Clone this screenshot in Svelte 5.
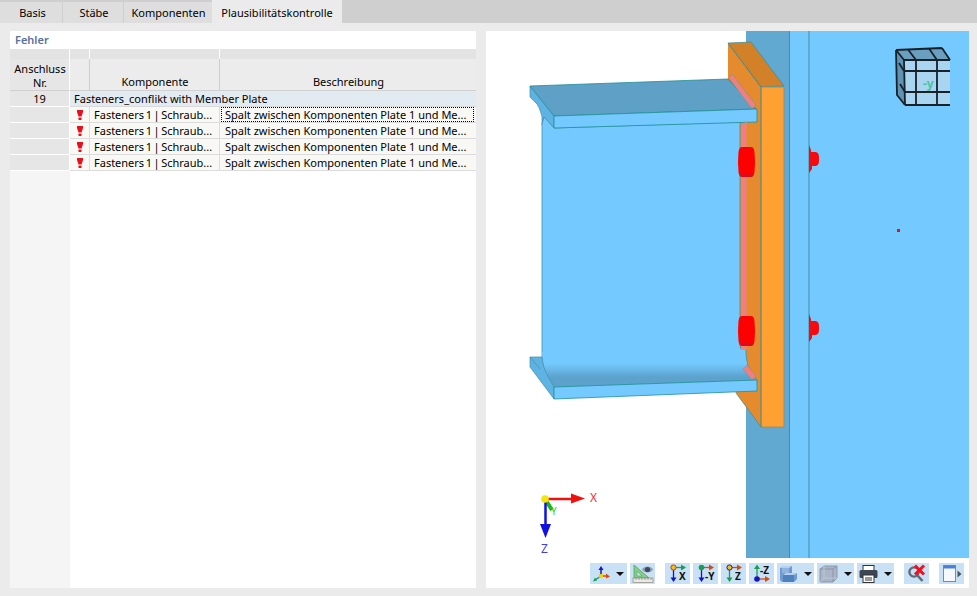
<script lang="ts">
  const tabs = ['Basis', 'Stäbe', 'Komponenten', 'Plausibilitätskontrolle'];
  const rows = [1, 2, 3, 4];
</script>

<div class="window">
  <div class="tabbar">
    {#each tabs as tab, i}
      <div class="tab tab-{i}" class:active={i === 3}>{tab}</div>
    {/each}
  </div>

  <div class="content">
    <section class="panel left">
      <div class="title">Fehler</div>
      <div class="grid">
        <div class="band"></div><div class="band"></div><div class="band"></div><div class="band last"></div>
        <div class="head rowhead">Anschluss<br />Nr.</div>
        <div class="head"></div>
        <div class="head">Komponente</div>
        <div class="head last">Beschreibung</div>

        <div class="rownum">19</div>
        <div class="group">Fasteners_conflikt with Member Plate</div>

        {#each rows as r}
          <div class="rownum"></div>
          <div class="cell icon">
            <svg width="6" height="10" viewBox="0 0 6 10">
              <path d="M0 0h6v2l-1.5 4.5h-3l-1.5-4.5z" fill="#e8101c" />
              <rect x="1.5" y="7.5" width="3" height="2.5" fill="#e8101c" />
            </svg>
          </div>
          <div class="cell comp">Fasteners 1 | Schraub...</div>
          <div class="cell last desc"><span class:focus={r === 1}>Spalt zwischen Komponenten Plate 1 und Me...</span></div>
        {/each}
      </div>
      <div class="stub"></div>
    </section>

    <section class="panel right">
      <div class="scene">
        <svg width="483" height="527" viewBox="486 31 483 527">
          <defs>
            <linearGradient id="fillet" x1="0" y1="0" x2="0" y2="1">
              <stop offset="0" stop-color="#74caff" />
              <stop offset="0.32" stop-color="#74caff" />
              <stop offset="0.72" stop-color="#5ca2cc" />
              <stop offset="1" stop-color="#5ca2cc" />
            </linearGradient>
            <linearGradient id="bolt" x1="0" y1="0" x2="0" y2="1">
              <stop offset="0" stop-color="#f40008" />
              <stop offset="0.1" stop-color="#ff0000" />
              <stop offset="0.82" stop-color="#ff0000" />
              <stop offset="1" stop-color="#cf1020" />
            </linearGradient>
          </defs>

          <!-- column -->
          <rect x="746" y="31" width="223" height="527" fill="#74caff" />
          <rect x="746" y="31" width="44" height="527" fill="#62a9d2" />
          <path d="M789.5 31V558M809 31V558" stroke="#3f8fa5" stroke-width="1" />

          <!-- end plate -->
          <path d="M728 43L761 87V427L736 393L728 380Z" fill="#e58a2d" />
          <path d="M728 43L751 42L784 86L761 87Z" fill="#d38128" stroke="#2f8f9a" stroke-width="0.7" />
          <path d="M761 87H784V427H761Z" fill="#ffa033" stroke="#8d8d70" stroke-width="0.8" />
          <path d="M728 43L761 87V427L736 393" fill="none" stroke="#2f8f9a" stroke-width="0.7" />

          <!-- top flange -->
          <path d="M530 86V97L537 104C540 109 541 113 542 117V125L544 117L554 128V115Z" fill="#5fb3e3" stroke="#3f8fa5" stroke-width="0.7" />
          <path d="M530 86L728 79L756 109L554 116Z" fill="#5ea0c6" stroke="#1f8f96" stroke-width="0.8" />
          <path d="M729 78L732 74L756 105L752 109Z" fill="#f08080" stroke="#5d9aa0" stroke-width="0.5" />

          <!-- web -->
          <path d="M542 357V124L544 117L554 128L740 122V346L741 349H746C746 360 747 370 757 380L554 387C548 376 542 370 542 357Z" fill="#74caff" stroke="#3f8fa5" stroke-width="0.8" />
          <path d="M554 128L757 122V109L554 116Z" fill="#74caff" stroke="#1f8f96" stroke-width="0.8" />
          <path d="M741 124H745V121H746.5V350H741Z" fill="#f08080" />
          <path d="M542 352C543 370 549 378 554 387L757 380C751 376 748 370 746 360L740 352Z" fill="url(#fillet)" />

          <!-- bottom flange -->
          <path d="M530 357H542C543 370 549 378 554 387V399L530 367Z" fill="#5fb3e3" stroke="#3f8fa5" stroke-width="0.7" />
          <path d="M530 357L540 369" stroke="#3f8fa5" stroke-width="0.7" />
          <path d="M743 369L747 365L756 376L752 380Z" fill="#f08080" stroke="#5d9aa0" stroke-width="0.5" />
          <path d="M554 387L757 380V391L554 399Z" fill="#74caff" stroke="#1f8f96" stroke-width="0.8" />

          <!-- bolts -->
          <path d="M742 147H751Q754 147 754.500 152Q755.500 162 754.500 172Q754 177 751 177H742Q739 177 738.500 172Q737.500 162 738.500 152Q739 147 742 147Z" fill="url(#bolt)" />
          <path d="M742 316H751Q754 316 754.500 321Q755.500 331 754.500 341Q754 346 751 346H742Q739 346 738.500 341Q737.500 331 738.500 321Q739 316 742 316Z" fill="url(#bolt)" />
          <path d="M809 145L811 150V152H816Q819 153 819 157V161Q819 165 816 166H812V169L809 173Z" fill="#f50a10" />
          <path d="M809 314L811 319V321H816Q819 322 819 326V330Q819 334 816 335H812V338L809 342Z" fill="#f50a10" />
          <rect x="897" y="229" width="3" height="3" fill="#e81010" />

          <!-- view cube -->
          <path d="M896 50L942 48L950 60H904Z" fill="#6a9fbf" />
          <path d="M896 50L904 60L905 105L897 95Z" fill="#5f93b4" />
          <path d="M904 60H950V105H905Z" fill="#a9d5f0" />
          <g stroke="#17212a" stroke-width="1.8" fill="none">
            <path d="M904 60H950M904.5 71H950M905 92H950M905 105H950" />
            <path d="M904 60L905 105M916 60V105M937 60V105" />
            <path d="M896 50L904 60M908 49.5L916 60M929 48.5L937 60M942 48L950 60M896 50L942 48" />
            <path d="M896 50L897 95L905 105M899 63L904 71M900 84L905 92" />
          </g>
          <text x="923" y="88" class="cube-label">-y</text>

          <!-- axes -->
          <path d="M545 499L552 510" stroke="#14b814" stroke-width="4" />
          <path d="M545 499H572" stroke="#f01010" stroke-width="2.5" />
          <path d="M571 493.5L585 498.5L571 503.5Z" fill="#f01010" />
          <path d="M545.5 499V526" stroke="#1010e0" stroke-width="2.5" />
          <path d="M540 524L545.5 538L551 524Z" fill="#1010e0" />
          <circle cx="545" cy="499" r="3.8" fill="#f2e60c" />
          <text x="590" y="502" class="axis" fill="#f03030">X</text>
          <text x="551" y="515" class="axis small" fill="#30d030">Y</text>
          <text x="541" y="553" class="axis" fill="#4040e0">Z</text>
        </svg>
      </div>

      <div class="toolbar">
        <div class="btn wide">
          <svg width="18" height="18" viewBox="0 0 18 18">
            <path d="M9 10V3" stroke="#1414d0" stroke-width="1.5" /><path d="M6.5 5L9 1L11.5 5Z" fill="#1414d0" />
            <path d="M9 11H15" stroke="#d84a10" stroke-width="1.5" /><path d="M14 8.5L18 11.5L14 13.5Z" fill="#d84a10" />
            <path d="M9 11L3 15" stroke="#12a060" stroke-width="1.5" /><path d="M1 16.5L3 12.5L5 15.5Z" fill="#12a060" />
            <rect x="7" y="9" width="4" height="3.5" fill="#f0d010" />
          </svg>
          <span class="caret"></span>
        </div>
        <div class="btn">
          <svg width="22" height="20" viewBox="0 0 22 20">
            <path d="M2 1L17 14H2Z" fill="#7fd088" stroke="#5a9a68" stroke-width="0.8" />
            <path d="M5 7L10 12H5Z" fill="#c9e1f5" stroke="#5a9a68" stroke-width="0.6" />
            <rect x="1" y="14" width="20" height="4.5" fill="#e9e9e4" stroke="#8a8a80" stroke-width="0.7" />
            <path d="M4 14v2M7 14v2M10 14v2M13 14v2M16 14v2M19 14v2" stroke="#777" stroke-width="0.6" />
            <path d="M10 5.5C12 1.5 19 1.5 21 5.5C19 9.5 12 9.5 10 5.5Z" fill="#8e9bb0" />
            <circle cx="15.5" cy="5.5" r="2.6" fill="#3b4a66" />
          </svg>
        </div>
        <div class="btn gap">
          <svg width="22" height="19" viewBox="0 0 22 19">
            <path d="M6.5 3V15" stroke="#1414c0" stroke-width="1.3" /><path d="M3.5 13.5L6.5 18L9.5 13.5Z" fill="#1414c0" />
            <path d="M7 3.5H15" stroke="#14a050" stroke-width="1.3" /><path d="M14 0.5L19 3.5L14 6.5Z" fill="#14a050" />
            <circle cx="6.5" cy="3.5" r="2.6" fill="#f0c020" stroke="#d03020" stroke-width="1" />
            <text x="12" y="16" class="ax">X</text>
          </svg>
        </div>
        <div class="btn">
          <svg width="22" height="19" viewBox="0 0 22 19">
            <path d="M6.5 3V15" stroke="#1414c0" stroke-width="1.3" /><path d="M3.5 13.5L6.5 18L9.5 13.5Z" fill="#1414c0" />
            <path d="M7 3.5H15" stroke="#d84a10" stroke-width="1.3" /><path d="M14 0.5L19 3.5L14 6.5Z" fill="#d84a10" />
            <circle cx="6.5" cy="3.5" r="2.8" fill="#14a050" />
            <text x="10" y="16" class="ax">-Y</text>
          </svg>
        </div>
        <div class="btn">
          <svg width="22" height="19" viewBox="0 0 22 19">
            <path d="M6.5 3V15" stroke="#14a050" stroke-width="1.3" /><path d="M3.5 13.5L6.5 18L9.5 13.5Z" fill="#14a050" />
            <path d="M7 3.5H15" stroke="#d84a10" stroke-width="1.3" /><path d="M14 0.5L19 3.5L14 6.5Z" fill="#d84a10" />
            <circle cx="6.5" cy="3.5" r="2.6" fill="#f0c020" stroke="#1414c0" stroke-width="1" />
            <text x="12" y="16" class="ax">Z</text>
          </svg>
        </div>
        <div class="btn">
          <svg width="22" height="19" viewBox="0 0 22 19">
            <path d="M6 14V4" stroke="#14a050" stroke-width="1.3" /><path d="M3 5L6 0.5L9 5Z" fill="#14a050" />
            <path d="M7 15H15" stroke="#d84a10" stroke-width="1.3" /><path d="M14 12L19 15L14 18Z" fill="#d84a10" />
            <circle cx="6" cy="15" r="2.8" fill="#1414c0" />
            <text x="9" y="10" class="ax">-Z</text>
          </svg>
        </div>
        <div class="btn wide">
          <svg width="19" height="18" viewBox="0 0 19 18">
            <path d="M1 3L4 1H13L13 8H18V14L15 17H3L1 15Z" fill="#6d9bd2" />
            <path d="M1 3L4 1H13L10 3Z" fill="#b4d0ee" />
            <path d="M3 3H10V8H3Z" fill="#8fb4df" />
            <path d="M4 10L7 8H18L15 10Z" fill="#b4d0ee" />
            <path d="M4 10H15V17H4Z" fill="#4f82bd" />
          </svg>
          <span class="caret"></span>
        </div>
        <div class="btn wide">
          <svg width="19" height="18" viewBox="0 0 19 18" fill="#aab6c6" stroke="#8592a6" stroke-width="0.9">
            <path d="M1 4L5 1H18V13L14 17H1Z" />
            <path d="M1 4H14V17M14 4L18 1" fill="none" />
            <path d="M5 1V13H18M5 13L1 17" fill="none" stroke="#c2cad6" />
          </svg>
          <span class="caret"></span>
        </div>
        <div class="btn wide">
          <svg width="19" height="18" viewBox="0 0 19 18">
            <rect x="4" y="0.5" width="11" height="5" fill="#fff" stroke="#333" />
            <rect x="0.5" y="5" width="18" height="8" rx="1.5" fill="#3e4654" />
            <rect x="4" y="10" width="11" height="7.5" fill="#fff" stroke="#333" />
            <path d="M6 13h7M6 15h7" stroke="#333" />
          </svg>
          <span class="caret"></span>
        </div>
        <div class="btn gap2">
          <svg width="20" height="19" viewBox="0 0 20 19">
            <circle cx="7" cy="8" r="4.6" fill="none" stroke="#5f6a76" stroke-width="2.4" />
            <path d="M10.5 11.5L15.5 17" stroke="#5f6a76" stroke-width="2.6" />
            <path d="M8 1.5L17 10.5M17 1.5L8 10.5" stroke="#f01020" stroke-width="3" />
          </svg>
        </div>
        <div class="btn gap3">
          <svg width="20" height="19" viewBox="0 0 20 19">
            <rect x="1.5" y="1.5" width="12" height="16" fill="#f5f8fc" stroke="#7a8aa0" />
            <rect x="1.5" y="1.5" width="12" height="3" fill="#4a80d8" />
            <path d="M15.5 6.5L19.5 10L15.5 13.5Z" fill="#4a5560" />
          </svg>
        </div>
      </div>
    </section>
  </div>
</div>

<style>
  :global(body) {
    margin: 0;
  }

  .window {
    width: 977px;
    height: 596px;
    background: #ebebeb;
    font-family: 'Noto Sans', sans-serif;
    font-size: 11px;
    color: #000;
    overflow: hidden;
  }

  .tabbar {
    display: flex;
    height: 23px;
    background: #cfcfcf;
  }

  .tab {
    margin-top: 2px;
    margin-right: 1px;
    background: #dedede;
    text-align: center;
    line-height: 21px;
    box-sizing: border-box;
  }

  .tab-0 { width: 62px; padding-left: 3px; }
  .tab-1 { width: 60px; padding-left: 2px; }
  .tab-2 { width: 88px; margin-right: 0; padding-left: 1px; }
  .tab-3 { width: 130px; }

  .tab.active {
    margin-top: 0;
    background: #ebebeb;
    line-height: 25px;
  }

  .content {
    display: flex;
    gap: 10px;
    padding: 8px 8px 8px 10px;
    height: 573px;
    box-sizing: border-box;
  }

  .panel {
    background: #fff;
    position: relative;
  }

  .left {
    width: 466px;
    display: flex;
    flex-direction: column;
  }

  .right {
    width: 483px;
    display: flex;
    flex-direction: column;
  }

  .title {
    height: 18px;
    line-height: 18px;
    padding-left: 5px;
    font-weight: 600;
    color: #5a6f9f;
  }

  .grid {
    display: grid;
    grid-template-columns: 60px 20px 130px 256px;
    grid-template-rows: 10px 32px repeat(5, 16px);
  }

  .band {
    background: #e3e3e3;
    border-right: 1px solid #fff;
  }

  .band.last,
  .head.last,
  .cell.last {
    border-right: 0;
  }

  .head {
    background: #ececec;
    border-right: 1px solid #cfcfcf;
    border-bottom: 1px solid #d0d0d0;
    text-align: center;
    display: flex;
    align-items: flex-end;
    justify-content: center;
    line-height: 14px;
    padding-bottom: 1px;
    padding-left: 1px;
    box-sizing: border-box;
  }

  .head.rowhead {
    background: #e6e6e6;
    border-right: 1px solid #fff;
    align-items: center;
    padding: 2px 0 0 1px;
  }

  .rownum {
    background: #e6e6e6;
    border-right: 1px solid #fff;
    border-bottom: 1px solid #fff;
    text-align: center;
    line-height: 15px;
  }

  .group {
    grid-column: 2 / 5;
    background: #e3ebf2;
    border-bottom: 1px solid #d9d9d9;
    padding-left: 4px;
    line-height: 15px;
  }

  .cell {
    background: #f8f9f4;
    border-right: 1px solid #dcdcdc;
    border-bottom: 1px solid #dcdcdc;
    padding-left: 4px;
    line-height: 15px;
    white-space: nowrap;
    overflow: hidden;
  }

  .cell.icon {
    padding: 3px 0 0 7px;
    line-height: 0;
    box-sizing: border-box;
  }

  .comp {
    word-spacing: -1.3px;
  }

  .desc {
    padding-left: 1px;
  }

  .desc span {
    display: block;
    width: 248px;
    padding-left: 3px;
    border: 1px solid transparent;
    line-height: 13px;
  }

  .desc span.focus {
    border: 1px dotted #000;
  }

  .stub {
    flex: 1;
    width: 60px;
    background: #f5f5f5;
  }

  .scene {
    height: 527px;
    line-height: 0;
  }

  .cube-label {
    font: 700 12px 'Noto Sans', sans-serif;
    fill: #45c4a4;
  }

  .axis {
    font: 12px 'Noto Sans', sans-serif;
  }

  .axis.small {
    font-size: 10px;
  }

  .ax {
    font: 700 10px 'Noto Sans', sans-serif;
    fill: #111;
  }

  .toolbar {
    display: flex;
    gap: 3px;
    padding: 5px 0 0 104px;
  }

  .btn {
    width: 25px;
    height: 21px;
    background: #c9e1f5;
    display: flex;
    align-items: center;
    justify-content: center;
  }

  .btn.wide {
    width: 37px;
    justify-content: flex-start;
    padding-left: 2px;
    gap: 6px;
    box-sizing: border-box;
  }

  .btn.gap { margin-left: 7px; }
  .btn.gap2 { margin-left: 7px; }
  .btn.gap3 { margin-left: 7px; }

  .caret {
    width: 0;
    height: 0;
    border-left: 4px solid transparent;
    border-right: 4px solid transparent;
    border-top: 4px solid #111;
  }
</style>
